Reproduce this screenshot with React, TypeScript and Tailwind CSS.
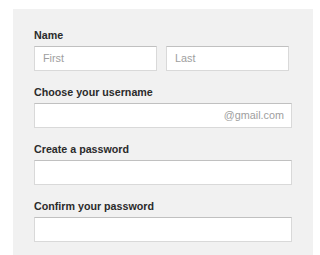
import React from "react";

const font = { fontFamily: '"Liberation Sans", Arial, sans-serif' };

function Field({ label, children }: { label: string; children: React.ReactNode }) {
  return (
    <div className="flex flex-col">
      <label className="text-[10.7px] leading-[16px] font-bold text-[#2b2b2b] mb-[3px]">{label}</label>
      {children}
    </div>
  );
}

function Input({ placeholder, className = "", suffix }: { placeholder?: string; className?: string; suffix?: string }) {
  return (
    <div
      className={`h-[25px] bg-white border border-[#d9d9d9] border-t-[#c0c0c0] flex items-center pl-[8px] pr-[7px] text-[10.8px] ${className}`}
    >
      {placeholder && <span className="text-[#9e9e9e]">{placeholder}</span>}
      {suffix && <span className="ml-auto text-[#9e9e9e]">{suffix}</span>}
    </div>
  );
}

export default function App() {
  return (
    <div className="w-[320px] h-[255px] bg-white overflow-hidden" style={font}>
      <div className="ml-[13px] mt-[9px] w-[300px] h-[260px] bg-[#f1f1f1] pl-[21px] pr-[21px] pt-[18px] flex flex-col gap-[13px]">
        <Field label="Name">
          <div className="flex gap-[9px]">
            <Input placeholder="First" className="w-[123px]" />
            <Input placeholder="Last" className="w-[123px]" />
          </div>
        </Field>
        <Field label="Choose your username">
          <Input className="w-[258px]" suffix="@gmail.com" />
        </Field>
        <Field label="Create a password">
          <Input className="w-[258px]" />
        </Field>
        <Field label="Confirm your password">
          <Input className="w-[258px]" />
        </Field>
      </div>
    </div>
  );
}
